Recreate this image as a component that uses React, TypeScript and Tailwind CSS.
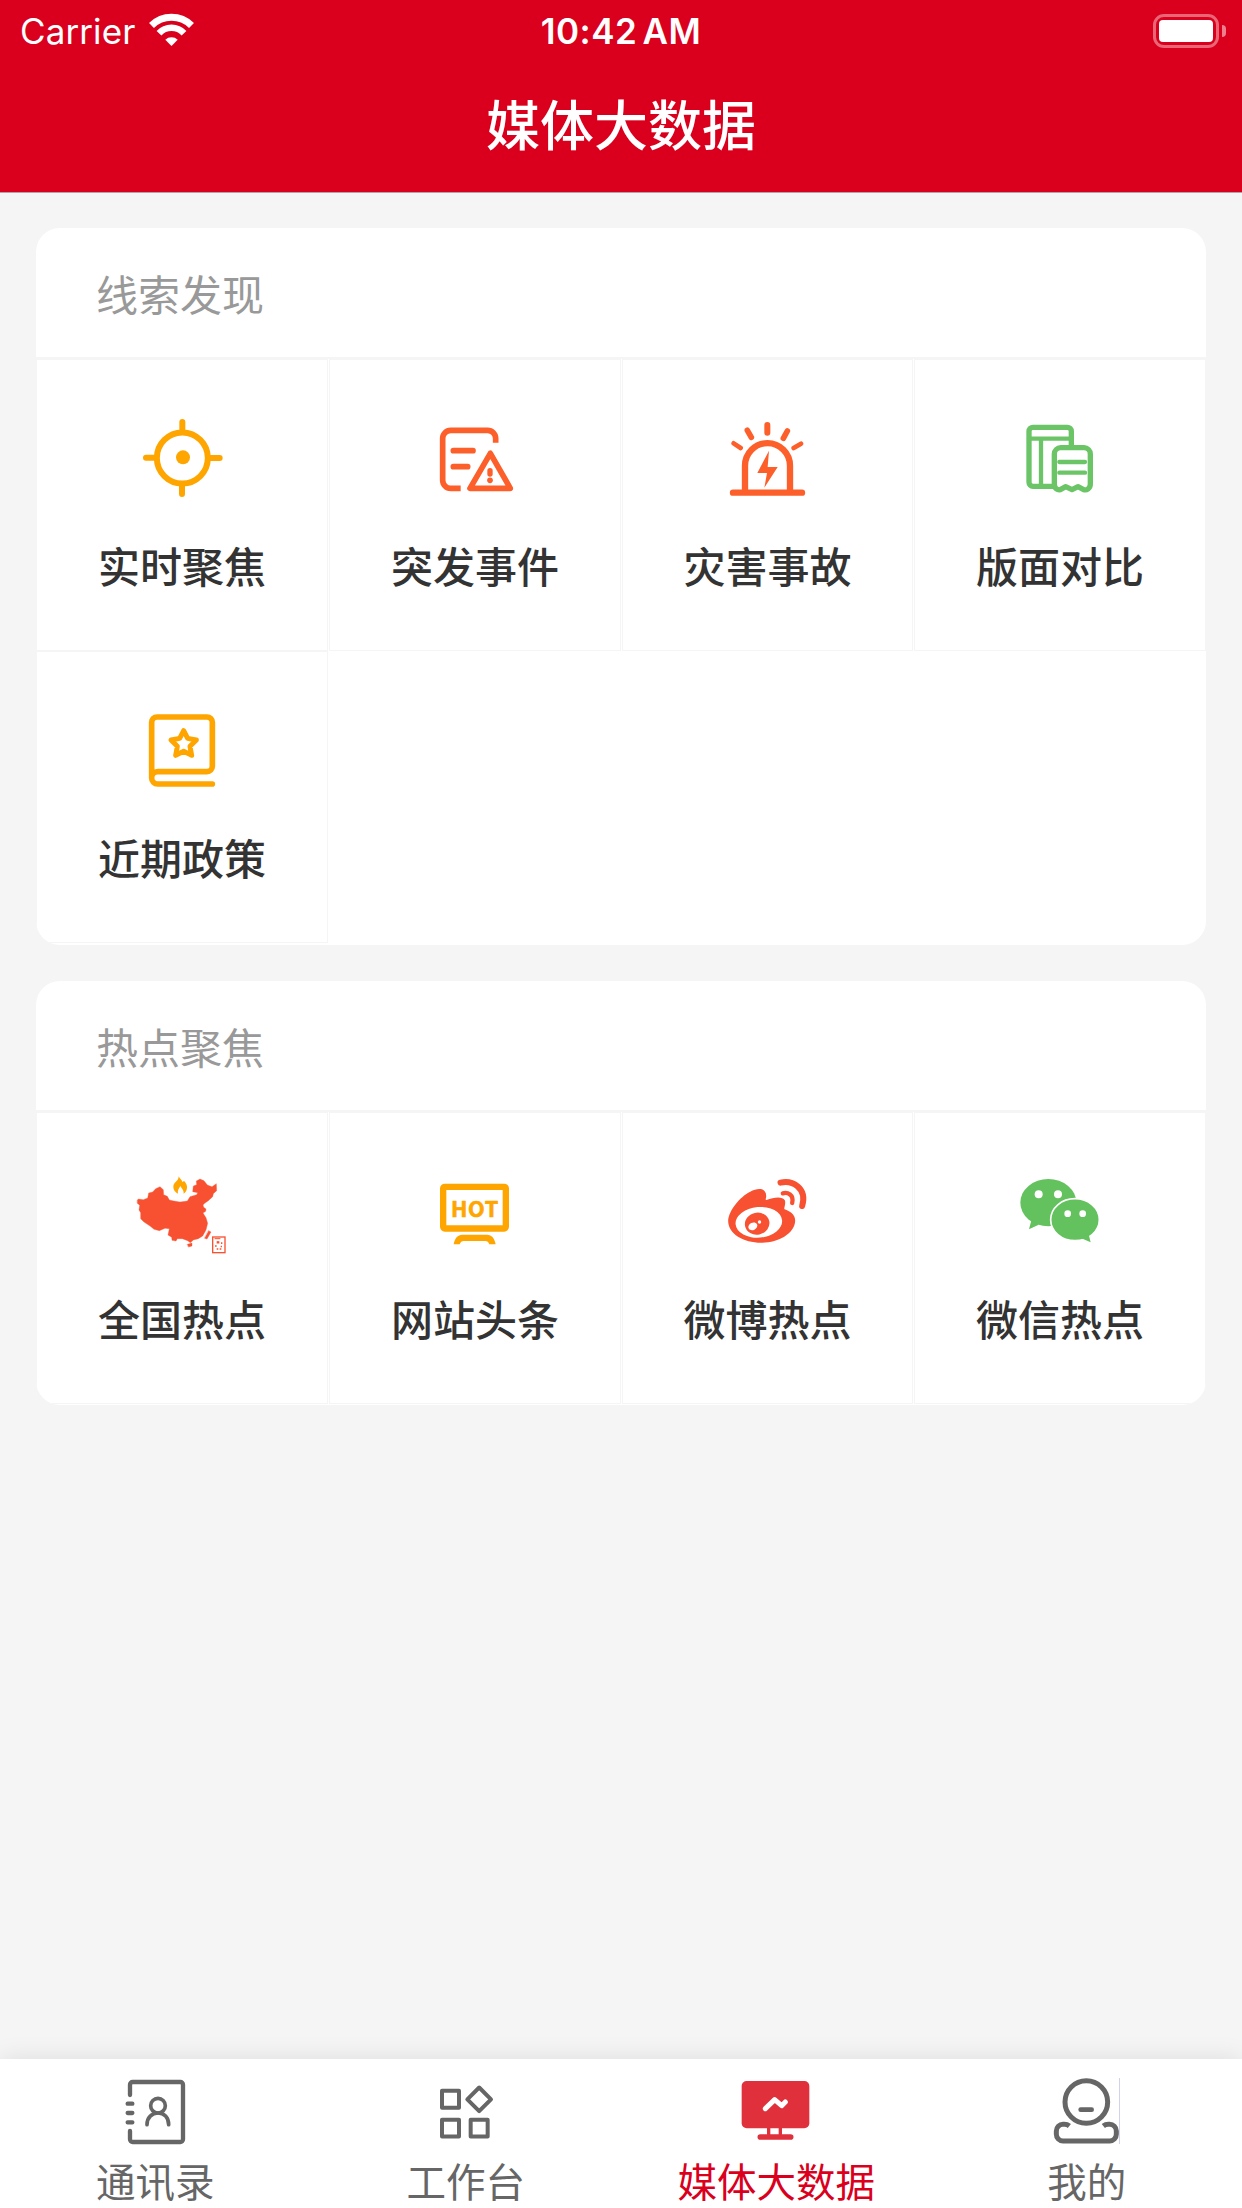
import React from 'react';

type GridItem = { label: string; icon: React.ReactNode };

type IconProps = { viewBox?: string; color: string; children: React.ReactNode };

function CellIcon({ viewBox = '0 0 288 288', color, children }: IconProps) {
  return (
    <svg viewBox={viewBox} fill="none" stroke={color} strokeLinecap="round" strokeLinejoin="round" className="w-24 h-24 shrink-0">
      {children}
    </svg>
  );
}

function TabIcon({ viewBox, color, children }: IconProps) {
  return (
    <svg viewBox={viewBox} fill="none" stroke={color} strokeLinecap="round" strokeLinejoin="round" className="w-[66px] h-[66px] shrink-0 overflow-visible">
      {children}
    </svg>
  );
}

const clues: GridItem[] = [
  {
    label: '实时聚焦',
    icon: (
      <CellIcon color="#ffa500">
        <circle cx="145" cy="144" r="76.5" strokeWidth="18" />
        <circle cx="147" cy="142" r="21" fill="#ffa500" stroke="none" />
        <path d="M145 36V62M144 228V252M36 143.5H64M228 144H257" strokeWidth="18" />
      </CellIcon>
    ),
  },
  {
    label: '突发事件',
    icon: (
      <CellIcon viewBox="1 0 288 288" color="#fd5f2b">
        <path d="M207 98V85a24 24 0 0 0-24-24H72a24 24 0 0 0-24 24v126a24 24 0 0 0 24 24h30" strokeWidth="17" strokeLinecap="butt" />
        <path d="M80 122H139M80 170H123" strokeWidth="17" />
        <path d="M191 130L130 235H251Z" strokeWidth="17" />
        <path d="M190 182V192" strokeWidth="16" />
        <circle cx="190" cy="211" r="8.5" fill="#fd5f2b" stroke="none" />
      </CellIcon>
    ),
  },
  {
    label: '灾害事故',
    icon: (
      <CellIcon color="#fd5f2b">
        <path d="M75 245V167a67.5 67.5 0 0 1 135 0V245" strokeWidth="19" />
        <path d="M39 248H246" strokeWidth="19" />
        <path d="M142 45V68" strokeWidth="18" />
        <path d="M82 61L94 82M202 63L190 85" strokeWidth="17" />
        <path d="M41 100L62 114M243 101L221 114" strokeWidth="14" />
        <path d="M147 122L112 189H141L133 233L173 171H143Z" fill="#fd5f2b" stroke="none" />
      </CellIcon>
    ),
  },
  {
    label: '版面对比',
    icon: (
      <CellIcon color="#6bc567">
        <path d="M178 108V64a12 12 0 0 0-12-12H63a12 12 0 0 0-12 12V217a12 12 0 0 0 12 12H122" strokeWidth="16" />
        <path d="M51 86H178M87 86V229" strokeWidth="13" />
        <path
          d="M127 132a19 19 0 0 1 19-19H216a19 19 0 0 1 19 19V222c0 13-11 20-20 17l-17-9-18 9-19-9-16 9c-9 2-18-4-18-17Z"
          strokeWidth="16"
        />
        <path d="M142 156H219M142 188H219" strokeWidth="13" />
      </CellIcon>
    ),
  },
  {
    label: '近期政策',
    icon: (
      <CellIcon color="#ffa500">
        <path
          d="M235 246H71a18 18 0 0 1-18-18V61a16 16 0 0 1 16-16H219a16 16 0 0 1 16 16V193a16 16 0 0 1-16 16H71a18 18 0 0 0-18 18"
          strokeWidth="17"
        />
        <path
          d="M149 86L161 109L187 114L168 133L173 160L149 148L125 160L130 133L111 114L137 109Z"
          strokeWidth="15"
        />
      </CellIcon>
    ),
  },
];

const hotspots: GridItem[] = [
  {
    label: '全国热点',
    icon: (
      <CellIcon viewBox="102 39 288 288" color="#f85131">
        <path
          d="M112 150L116 147L130 149L143 144L146 129L158 126L167 116L180 110L190 119L191 134L202 139L208 150L222 153L240 156L262 153L270 140L290 134L293 128L278 125L280 108L290 104L289 93L300 87L312 92L322 105L336 110L349 101L350 122L340 131L338 140L325 152L314 160L309 165L311 172L318 177L317 184L309 189L318 203L323 220L318 240L308 258L295 266L280 270L271 278L263 272L247 266L232 266L228 273L216 271L215 262L204 255L208 236L195 235L178 242L162 238L150 228L132 216L122 206L122 188L117 180L119 166L112 160Z"
          fill="#f85131"
          strokeWidth="1"
        />
        <path d="M262 283L276 279L276 288L266 291ZM326 242L333 246L321 267L314 265Z" fill="#f85131" strokeWidth="1" />
        <rect x="338" y="261" width="37" height="47" strokeWidth="4" strokeLinejoin="miter" />
        <path d="M345 266H360" strokeWidth="3" />
        <path d="M350 277h8" strokeWidth="7" strokeLinecap="butt" />
        <path d="M347 288h1M365 279v1M364 289v1M352 297h1M361 297h1" strokeWidth="4" strokeLinecap="square" />
        <path
          d="M236 79c4 8 9 10 12 18l4-5c7 8 10 14 9 22-1 9-5 14-10 17 1-10-5-14-10-23-5 9-9 13-7 23-8-4-14-10-14-20 0-11 8-15 12-20 3-4 4-8 4-12z"
          fill="#ffa500"
          stroke="none"
        />
      </CellIcon>
    ),
  },
  {
    label: '网站头条',
    icon: (
      <CellIcon viewBox="981 39 288 288" color="#ffa500">
        <rect x="1029.5" y="110.5" width="188" height="125" rx="5" strokeWidth="19" />
        <text
          x="1053"
          y="201"
          textLength="142"
          fill="#ffa500"
          strokeWidth="2"
          className="font-['Noto_Sans_CJK_SC'] font-bold text-[65px]"
        >
          HOT
        </text>
        <path d="M1061 283c3-18 12-29 26-29h74c14 0 23 11 26 29h-19c-3-7-6-10-12-10h-65c-6 0-9 3-12 10z" fill="#ffa500" stroke="none" />
      </CellIcon>
    ),
  },
  {
    label: '微博热点',
    icon: (
      <CellIcon viewBox="89.5 39 288 288" color="#f85131">
        <path
          d="M114 212C116 180 150 140 180 125C205 112 230 114 228 141C227 145 225 151 229 150C250 142 276 137 284 151C288 162 280 175 283 178C300 184 316 194 315 213C313 250 265 279 213 278C160 278 114 252 114 212Z"
          fill="#f85131"
          stroke="none"
        />
        <ellipse cx="206" cy="217" rx="70" ry="46" transform="rotate(-5 206 217)" fill="#fff" stroke="none" />
        <ellipse cx="201" cy="221" rx="37" ry="33" transform="rotate(-12 201 221)" fill="#f85131" stroke="none" />
        <ellipse cx="188" cy="229" rx="14" ry="11" transform="rotate(-25 188 229)" fill="#fff" stroke="none" />
        <circle cx="208" cy="216" r="5" fill="#fff" stroke="none" />
        <path d="M271 98C305 90 352 112 336 168" strokeWidth="18" />
        <path d="M278 130C292 126 312 134 306 159" strokeWidth="13" />
      </CellIcon>
    ),
  },
  {
    label: '微信热点',
    icon: (
      <CellIcon viewBox="966 39 288 288" color="#fff">
        <g fill="#63c15e" stroke="none">
          <ellipse cx="1075" cy="158" rx="84" ry="71" />
          <path d="M1025 208L1017 238L1046 224Z" />
        </g>
        <ellipse cx="1155" cy="209" rx="73" ry="63" fill="#63c15e" strokeWidth="5" />
        <path d="M1174 265L1202 277L1195 250Z" fill="#63c15e" stroke="none" />
        <g fill="#fff" stroke="none">
          <circle cx="1046" cy="133" r="12" />
          <circle cx="1104" cy="133" r="12" />
          <circle cx="1133" cy="191" r="10" />
          <circle cx="1178" cy="191" r="10" />
        </g>
      </CellIcon>
    ),
  },
];

const tabs = [
  {
    label: '通讯录',
    active: false,
    icon: (
      <TabIcon viewBox="127 114 198 198" color="#666">
        <path d="M151 165V134a8 8 0 0 1 8-8H302a8 8 0 0 1 8 8V298a8 8 0 0 1-8 8H159a8 8 0 0 1-8-8V273" strokeWidth="13" />
        <path d="M144 191H158M144 219H158M144 247H158" strokeWidth="13" />
        <circle cx="235" cy="197" r="22" strokeWidth="11" />
        <path d="M202 254c0-22 15-35 33-35s32 13 32 35" strokeWidth="11" />
      </TabIcon>
    ),
  },
  {
    label: '工作台',
    active: false,
    icon: (
      <TabIcon viewBox="1059 115 198 198" color="#666">
        <path
          d="M1086 153.5h51v50.5h-51zM1086 240h51v50.5h-51zM1172 240h51v50.5h-51zM1197.500 143.500L1233 179L1197.500 214.500L1162 179Z"
          strokeWidth="12"
        />
      </TabIcon>
    ),
  },
  {
    label: '媒体大数据',
    active: true,
    icon: (
      <TabIcon viewBox="250 114 198 198" color="#e0303b">
        <rect x="246" y="123" width="203" height="142" rx="15" fill="#e0303b" stroke="none" />
        <path d="M327 264V288M362 264V288" strokeWidth="10" strokeLinecap="butt" />
        <path d="M302 291H393" strokeWidth="17" />
        <path d="M317 206L345 179L366 197L377 186" stroke="#fff" strokeWidth="15" />
      </TabIcon>
    ),
  },
  {
    label: '我的',
    active: false,
    icon: (
      <TabIcon viewBox="161 114 198 198" color="#666">
        <circle cx="258" cy="186" r="64" strokeWidth="15" />
        <path d="M241 209H274" strokeWidth="14" />
        <path
          d="M207 258c-6-5-9-5-15-5h-4a20 20 0 0 0-20 20v10a20 20 0 0 0 20 20H328a20 20 0 0 0 20-20v-10a20 20 0 0 0-20-20h-4c-6 0-9 0-15 5"
          strokeWidth="15"
          strokeLinecap="butt"
        />
        <rect x="356" y="114" width="3" height="198" fill="#d2d2ea" stroke="none" />
      </TabIcon>
    ),
  },
];

function StatusBar() {
  return (
    <div className="grid grid-cols-3 h-[60px] font-['Inter'] text-[35px] leading-[60px]">
      <div className="flex items-center pl-5">
        <span className="w-[116px] tracking-[0.1px]">Carrier</span>
        <svg viewBox="0 0 45 33" fill="none" stroke="#fff" className="w-[45px] h-[33px] ml-[13px] -mt-0.5">
          <path d="M2.500 12.400A28.500 28.500 0 0 1 42.500 12.400" strokeWidth="7" />
          <path d="M10 20.200A17 17 0 0 1 35 20.200" strokeWidth="6.500" />
          <path d="M22.500 33L16.300 26.800a9 9 0 0 1 12.400 0z" fill="#fff" stroke="none" />
        </svg>
      </div>
      <div className="pt-px text-center font-semibold tracking-[0.5px] [word-spacing:-4px] whitespace-nowrap">10:42 AM</div>
      <div className="flex items-center justify-end pr-4">
        <div className="w-[66px] h-[34px] p-[3px] rounded-[11px] border-[3px] border-white/40">
          <div className="w-full h-full rounded-[4px] bg-white" />
        </div>
        <div className="w-1 h-3 ml-[3px] rounded-r-full bg-white/50" />
      </div>
    </div>
  );
}

function Section({ title, items }: { title: string; items: GridItem[] }) {
  return (
    <section className="bg-white rounded-[24px] overflow-hidden pb-0.5 last:pb-px">
      <h2 className="h-[131px] pl-[60px] border-b-2 border-[#f5f5f5] text-[42px] leading-[129px] text-[#999]">{title}</h2>
      <div className="grid grid-cols-[292px_292px_291px_292px] gap-x-px">
        {items.map((item) => (
          <div key={item.label} className="h-[292px] pt-[50px] flex flex-col items-center border border-[#f5f5f5]">
            {item.icon}
            <span className="mt-[27px] text-[42px] leading-[63px] font-medium text-[#333]">{item.label}</span>
          </div>
        ))}
      </div>
    </section>
  );
}

export default function App() {
  return (
    <div className="w-[1242px] h-[2208px] flex flex-col overflow-hidden bg-[#f5f5f5] font-['Noto_Sans_CJK_SC',sans-serif]">
      <header className="h-[193px] shrink-0 bg-[#da001d] border-b border-[#b2a3a4] text-white">
        <StatusBar />
        <h1 className="text-center text-[54px] leading-[125px] font-medium">媒体大数据</h1>
      </header>

      <main className="flex-1 flex flex-col gap-9 px-9 pt-[35px]">
        <Section title="线索发现" items={clues} />
        <Section title="热点聚焦" items={hotspots} />
      </main>

      <nav className="h-[149px] shrink-0 grid grid-cols-4 bg-white shadow-[0_0_24px_rgba(0,0,0,0.1)]">
        {tabs.map((tab) => (
          <div key={tab.label} className={`flex flex-col items-center pt-[19px] ${tab.active ? 'text-[#da001d]' : 'text-[#666]'}`}>
            {tab.icon}
            <span className="mt-4 text-[39.5px] leading-10 whitespace-nowrap">{tab.label}</span>
          </div>
        ))}
      </nav>
    </div>
  );
}
